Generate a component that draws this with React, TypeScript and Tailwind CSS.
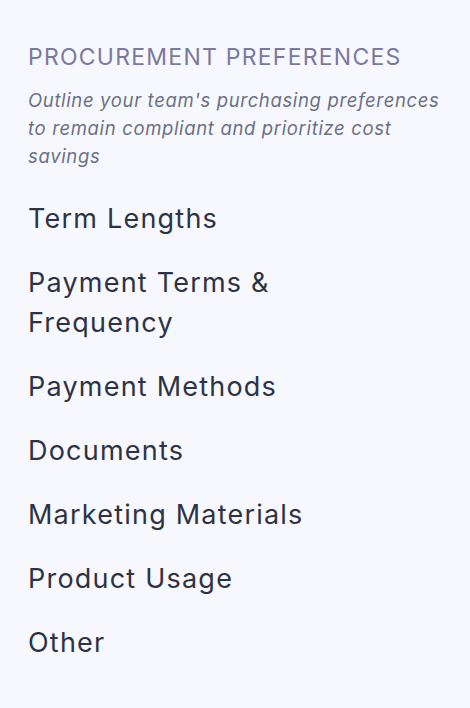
export default function App() {
  const items = [
    "Term Lengths",
    "Payment Terms & Frequency",
    "Payment Methods",
    "Documents",
    "Marketing Materials",
    "Product Usage",
    "Other",
  ];
  return (
    <div className="min-h-[708px] w-[470px] bg-[#f7f8fd] pl-[28px] pt-[42px]" style={{ fontFamily: "Inter, 'Noto Sans', sans-serif" }}>
      <h2 className="text-[23px] leading-[30px] uppercase tracking-[0.054em] text-[#7b799e]">Procurement Preferences</h2>
      <p className="mt-[14px] w-[422px] text-[18.5px] italic leading-[28px] tracking-[0.035em] text-[#6b7185]">
        Outline your team's purchasing preferences to remain compliant and prioritize cost savings
      </p>
      <ul className="mt-[29px] flex w-[330px] flex-col gap-[24px]">
        {items.map((t) => (
          <li key={t} className="text-[27px] leading-[40px] tracking-[0.045em] text-[#2d3344]">
            {t}
          </li>
        ))}
      </ul>
    </div>
  );
}
